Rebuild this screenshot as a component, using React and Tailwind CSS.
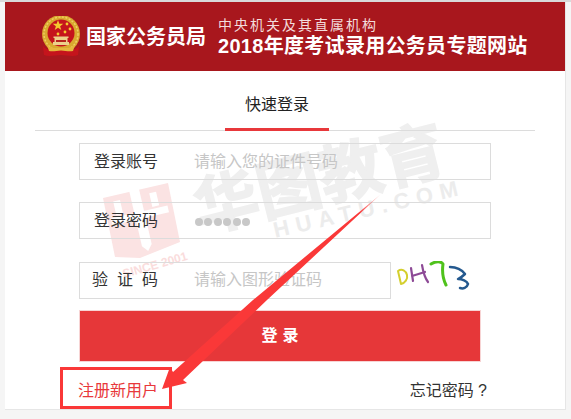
const cjk = "font-['Liberation_Sans','Noto_Sans_CJK_SC',sans-serif]";

const Emblem = () => (
  <svg width="40" height="42" viewBox="0 0 40 42" className="shrink-0">
    <circle cx="20" cy="18" r="19" fill="#d9a92f" />
    <circle cx="20" cy="18" r="17" fill="none" stroke="#efcf62" strokeWidth="1.5" strokeDasharray="2 1.5" />
    <circle cx="20" cy="17" r="13.5" fill="#c5141c" />
    <path d="M17 4l1.3 3.8h4l-3.2 2.4 1.2 3.8-3.3-2.3-3.3 2.3 1.2-3.8-3.2-2.4h4z" fill="#f4c92f" />
    <circle cx="26" cy="8" r="1.4" fill="#f4c92f" />
    <circle cx="29" cy="13" r="1.4" fill="#f4c92f" />
    <circle cx="24" cy="16" r="1.4" fill="#f4c92f" />
    <circle cx="17" cy="18" r="1.4" fill="#f4c92f" />
    <path d="M12 29v-3h1.5v-4h-1v-1.5h15V22h-1v4H28v3z" fill="#ecd08a" />
    <path d="M15 24h10v2H15z" fill="#b5241c" />
    <path d="M2 30c4 5 10 4 18 4s14 1 18-4l-1 9c-5 2-11 0-17 0s-12 2-17 0z" fill="#c5141c" />
    <path d="M6 29c4 4 9 3 14 3s10 1 14-3l-2 6c-4 1-8-.5-12-.5S12 36 8 35z" fill="#e6b63d" />
  </svg>
);

const Field = ({ label, placeholder, dots, narrow, spread }) => (
  <div className={`flex items-center h-[37px] border border-[#dcdcdc] ${narrow ? "w-[312px]" : "w-[412px]"}`}>
    {spread ? (
      <span className="w-[114px] pl-[12px] pr-[36px] flex justify-between text-[16px] text-[#333]">
        {label.map((c) => (
          <span key={c}>{c}</span>
        ))}
      </span>
    ) : (
      <span className="w-[114px] pl-[14px] text-[16px] text-[#333]">{label}</span>
    )}
    {dots ? (
      <span className="flex gap-[1.4px] mt-[3px] ml-[1px]">
        {[0, 1, 2, 3, 4, 5].map((i) => (
          <span key={i} className="w-[8px] h-[8px] rounded-full bg-[#c8c8c8]" />
        ))}
      </span>
    ) : (
      <span className="text-[16px] text-[#c6c6c6]">{placeholder}</span>
    )}
  </div>
);

const Captcha = () => (
  <svg width="78" height="32" viewBox="0 0 78 32" fill="none" strokeLinecap="round" strokeLinejoin="round" className="mb-[6px]">
    <path d="M2 10L5 23C9 22 12 18 11 14C10 10 6 7 2 10Z" stroke="#d4cf2e" strokeWidth="2" />
    <path d="M15 7L17 20M16 15L29 11M26 4C27 10 29 17 32 21" stroke="#8d4a96" strokeWidth="2.2" />
    <path d="M35 3C40 0 45 0 47 3C46 10 47 18 50 24" stroke="#4fc21c" strokeWidth="3" />
    <path d="M54 6C60 6 66 9 69 13C67 15 64 17 62 18C66 18 71 20 72 23C71 27 67 28 64 27" stroke="#24598f" strokeWidth="2.5" />
  </svg>
);

const Watermark = () => (
  <>
    <div className="absolute left-[320px] top-[180px] -translate-x-1/2 -translate-y-1/2 -rotate-[14deg] whitespace-nowrap text-[64px] leading-none font-bold text-[#efefef] [-webkit-text-stroke:1.5px_#efefef]">
      华图教育
    </div>
    <div className="absolute left-[369px] top-[209px] -translate-x-1/2 -translate-y-1/2 -rotate-[13deg] whitespace-nowrap text-[22px] leading-none font-bold text-[#ececec] tracking-[7px]">
      HUATU.COM
    </div>
    <svg width="90" height="85" viewBox="0 0 90 85" className="absolute left-[98px] top-[180px]">
      <path d="M5 18L70 3L82 62L42 78L17 77Z" fill="#fbe3e3" />
      <g transform="rotate(-13 42 40)" fill="#fff">
        <path d="M38 8h10v58l-5 6-5-6z" />
        <path d="M14 32h58v7H14z" />
        <path d="M20 16h7v14h-7zM57 16h7v14h-7z" />
      </g>
    </svg>
    <div className="absolute left-[155px] top-[265px] -translate-x-1/2 -translate-y-1/2 -rotate-[16deg] whitespace-nowrap text-[12px] leading-none font-bold text-[#fadcdc]">
      SINCE 2001
    </div>
  </>
);

export default function App() {
  return (
    <div className={`relative w-[571px] h-[419px] overflow-hidden bg-[#f5f5f5] ${cjk}`}>
      <div className="h-[2px] bg-[#d9d9d9]" />
      <div className="mx-[5px] h-[408px] bg-white border-b border-r border-[#e6e6e6]">
        {/* Header */}
        <div className="flex items-center h-[69px] pl-[36px] bg-[#a8171d] text-white">
          <Emblem />
          <span className="ml-[5px] text-[20px] font-bold leading-none">国家公务员局</span>
          <div className="ml-[12px] mt-[2px] flex flex-col">
            <span className="text-[14px] leading-[17px] tracking-[2px] text-[#f3dcdc]">中央机关及其直属机构</span>
            <span className="text-[20px] leading-[25px] font-bold tracking-[0.3px]">2018年度考试录用公务员专题网站</span>
          </div>
        </div>

        {/* Tab */}
        <div className="relative z-10 mx-[30px] pr-[16px] h-[60px] flex justify-center border-b border-[#dcdcdc]">
          <span className="h-[60px] w-[104px] flex items-center justify-center pt-[10px] text-[16px] text-[#222] border-b-[3px] border-[#e8383b]">
            快速登录
          </span>
        </div>

        {/* Form */}
        <div className="relative z-10 pl-[74px] pt-[12px] flex flex-col gap-[22px]">
          <Field label="登录账号" placeholder="请输入您的证件号码" />
          <Field label="登录密码" dots />
          <div className="flex items-center gap-[5px]">
            <Field label={["验", "证", "码"]} spread placeholder="请输入图形验证码" narrow />
            <Captcha />
          </div>
        </div>
        <div className="relative z-10 pl-[74px] pt-[11px]">
          <div className="w-[402px] h-[52px] flex items-center justify-center pl-[5px] bg-[#e63739] border border-[#f7d4d4] text-white font-bold text-[16px] tracking-[5px]">
            登录
          </div>
        </div>
        <div className="relative z-10 flex justify-between pt-[17px] pl-[73px] pr-[78px] text-[16px]">
          <span className="text-[#e8383b]">注册新用户</span>
          <span className="text-[#333]">忘记密码 ?</span>
        </div>
      </div>

      <Watermark />

      {/* Annotation */}
      <div className="absolute z-20 left-[60px] top-[367px] w-[112px] h-[42px] border-[3px] border-[#fa3838]" />
      <svg width="571" height="419" className="absolute z-20 left-0 top-0">
        <defs>
          <linearGradient id="arrowFade" gradientUnits="userSpaceOnUse" x1="381" y1="194" x2="360" y2="214">
            <stop offset="0" stopColor="#fa3838" stopOpacity="0.1" />
            <stop offset="1" stopColor="#fa3838" />
          </linearGradient>
        </defs>
        <path d="M381 194L267 300L183 380L187 383L162 389L170 367L173 372L253 300Z" fill="url(#arrowFade)" />
      </svg>
    </div>
  );
}
